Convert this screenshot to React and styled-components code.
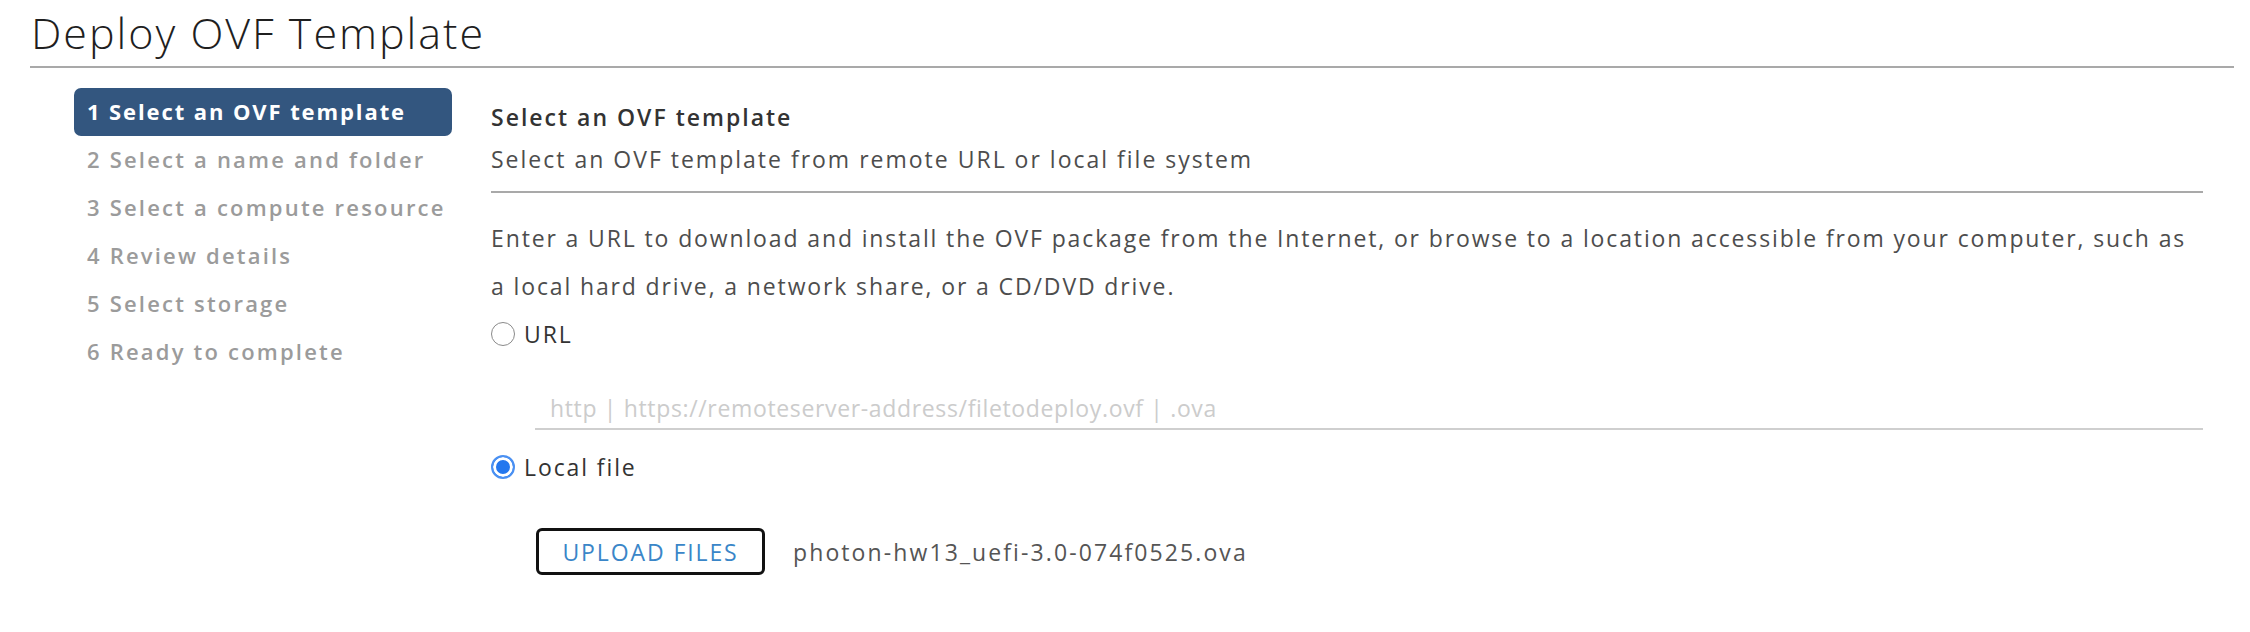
import React, { useState } from 'react';
import styled, { createGlobalStyle } from 'styled-components';

const GlobalStyle = createGlobalStyle`
    html, body {
        margin: 0;
        padding: 0;
        background: #ffffff;
    }
    body {
        font-family: "Open Sans", "Noto Sans", Arial, sans-serif;
        color: #4d4d4d;
    }
`;

// Cabeçalho
const Page = styled.div`
    width: 2250px;
    height: 632px;
    overflow: hidden;
`;

const Header = styled.header`
    margin: 0 16px 0 30px;
    height: 66px;
    border-bottom: 2px solid #a9a9a9;
    display: flex;
    align-items: flex-end;
`;

const Title = styled.h1`
    margin: 0 0 8px 1px;
    font-size: 43px;
    font-weight: 300;
    color: #1f1f1f;
    line-height: 50px;
    letter-spacing: 2px;
`;

const Body = styled.div`
    display: flex;
    gap: 39px;
    padding: 20px 47px 0 74px;
`;

// Passos do assistente
const Steps = styled.nav`
    width: 378px;
    flex-shrink: 0;
    display: flex;
    flex-direction: column;
`;

const Step = styled.div`
    height: 48px;
    box-sizing: border-box;
    display: flex;
    align-items: center;
    padding: 0 0 2px 13px;
    border-radius: 7px;
    font-size: 22px;
    font-weight: ${(p) => (p.$active ? 700 : 600)};
    color: ${(p) => (p.$active ? '#ffffff' : '#9b9b9b')};
    background: ${(p) => (p.$active ? '#33567f' : 'transparent')};
    letter-spacing: ${(p) => (p.$active ? 1.9 : 2.2)}px;
    white-space: nowrap;
`;

// Conteúdo
const Content = styled.main`
    flex: 1;
    display: flex;
    flex-direction: column;
`;

const Intro = styled.div`
    border-bottom: 2px solid #a9a9a9;
    padding-top: 14px;
    padding-bottom: 17px;
`;

const SectionTitle = styled.div`
    font-size: 23px;
    font-weight: 600;
    color: #333333;
    line-height: 30px;
    letter-spacing: 2px;
`;

const SubTitle = styled.div`
    margin-top: 12px;
    font-size: 23px;
    color: #4d4d4d;
    line-height: 30px;
    letter-spacing: 2px;
`;

const Paragraph = styled.p`
    margin: 21px 0 0;
    font-size: 23px;
    line-height: 48px;
    color: #4d4d4d;
    letter-spacing: 1.87px;
    white-space: nowrap;
`;

const RadioRow = styled.label`
    display: flex;
    align-items: center;
    gap: 9px;
    height: ${(p) => p.$height || 48}px;
    margin-top: ${(p) => p.$offset || 0}px;
    font-size: 23px;
    color: #333333;
    letter-spacing: 1.9px;
    cursor: pointer;
`;

const RadioCircle = styled.span`
    width: 24px;
    height: 24px;
    box-sizing: border-box;
    border-radius: 50%;
    border: ${(p) => (p.$checked ? '2px solid #4a90f2' : '1.5px solid #8a8a8a')};
    background: ${(p) => (p.$checked ? '#2477ee' : '#ffffff')};
    box-shadow: ${(p) => (p.$checked ? 'inset 0 0 0 3px #ffffff' : 'none')};
    flex-shrink: 0;
`;

const UrlField = styled.div`
    margin: 30px 0 0 44px;
    height: 40px;
    border-bottom: 2px solid #cfcfcf;
    display: flex;
    align-items: center;
    padding-left: 15px;
`;

const UrlInput = styled.input`
    border: none;
    outline: none;
    width: 100%;
    font-family: inherit;
    font-size: 23px;
    letter-spacing: 0.65px;
    color: #333;
    background: transparent;
    padding: 0;
    &::placeholder {
        color: #cccccc;
    }
`;

const UploadRow = styled.div`
    display: flex;
    align-items: center;
    gap: 28px;
    margin: 34px 0 0 45px;
`;

const UploadButton = styled.button`
    width: 229px;
    height: 47px;
    box-sizing: border-box;
    border: 3px solid #111111;
    border-radius: 6px;
    background: #ffffff;
    color: #3a86c8;
    font-family: inherit;
    font-size: 23px;
    font-weight: 500;
    letter-spacing: 1.9px;
    padding: 0;
    cursor: pointer;
`;

const FileName = styled.span`
    font-size: 23px;
    color: #555555;
    letter-spacing: 2.1px;
`;

const steps = [
    '1 Select an OVF template',
    '2 Select a name and folder',
    '3 Select a compute resource',
    '4 Review details',
    '5 Select storage',
    '6 Ready to complete',
];

const App = () => {
    const [source, setSource] = useState('local');

    return (
        <Page>
            <GlobalStyle />
            <Header>
                <Title>Deploy OVF Template</Title>
            </Header>
            <Body>
                <Steps>
                    {steps.map((s, i) => (
                        <Step key={s} $active={i === 0}>{s}</Step>
                    ))}
                </Steps>
                <Content>
                    <Intro>
                        <SectionTitle>Select an OVF template</SectionTitle>
                        <SubTitle>Select an OVF template from remote URL or local file system</SubTitle>
                    </Intro>
                    <Paragraph>
                        Enter a URL to download and install the OVF package from the Internet, or browse to a location accessible from your computer, such as
                        <br />
                        a local hard drive, a network share, or a CD/DVD drive.
                    </Paragraph>
                    <RadioRow onClick={() => setSource('url')}>
                        <RadioCircle $checked={source === 'url'} />
                        URL
                    </RadioRow>
                    <UrlField>
                        <UrlInput placeholder="http | https://remoteserver-address/filetodeploy.ovf | .ova" />
                    </UrlField>
                    <RadioRow $height={54} $offset={10} onClick={() => setSource('local')}>
                        <RadioCircle $checked={source === 'local'} />
                        Local file
                    </RadioRow>
                    <UploadRow>
                        <UploadButton>UPLOAD FILES</UploadButton>
                        <FileName>photon-hw13_uefi-3.0-074f0525.ova</FileName>
                    </UploadRow>
                </Content>
            </Body>
        </Page>
    );
};

export default App;
